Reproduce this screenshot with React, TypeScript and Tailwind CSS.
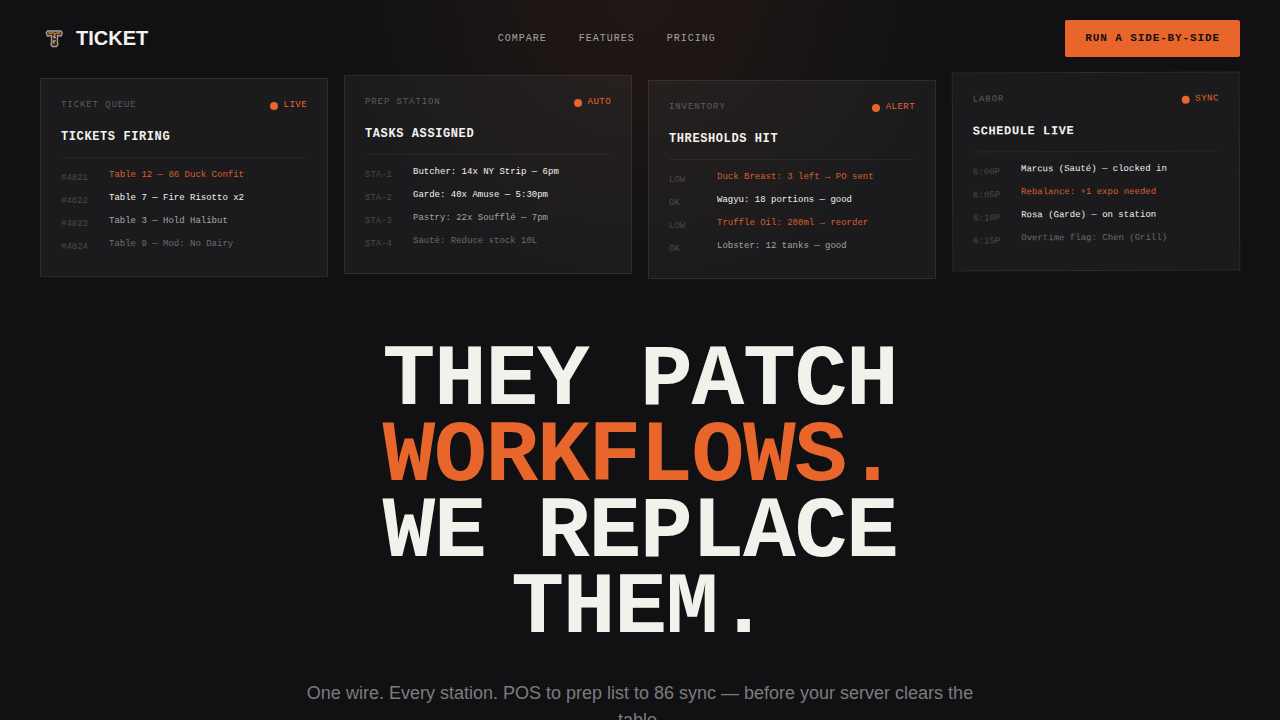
import clsx from "clsx";

type Tone = "hot" | "bright" | "mid" | "dim";

type Station = {
  label: string;
  status: string;
  title: string;
  pose: string;
  rows: { tag: string; text: string; tone: Tone }[];
};

const TONES: Record<Tone, string> = {
  hot: "text-[#d85f2b]",
  bright: "text-[#f4f2ed]",
  mid: "text-[#a3a3a3]",
  dim: "text-[#6a6a6c]",
};

const NAV = ["Compare", "Features", "Pricing"];

const STATIONS: Station[] = [
  {
    label: "Ticket Queue",
    status: "Live",
    title: "Tickets Firing",
    pose: "translate-y-0",
    rows: [
      { tag: "#4821", text: "Table 12 — 86 Duck Confit", tone: "hot" },
      { tag: "#4822", text: "Table 7 — Fire Risotto x2", tone: "bright" },
      { tag: "#4823", text: "Table 3 — Hold Halibut", tone: "mid" },
      { tag: "#4824", text: "Table 9 — Mod: No Dairy", tone: "dim" },
    ],
  },
  {
    label: "Prep Station",
    status: "Auto",
    title: "Tasks Assigned",
    pose: "-translate-y-[3px]",
    rows: [
      { tag: "STA-1", text: "Butcher: 14x NY Strip — 6pm", tone: "bright" },
      { tag: "STA-2", text: "Garde: 40x Amuse — 5:30pm", tone: "bright" },
      { tag: "STA-3", text: "Pastry: 22x Soufflé — 7pm", tone: "mid" },
      { tag: "STA-4", text: "Sauté: Reduce stock 10L", tone: "dim" },
    ],
  },
  {
    label: "Inventory",
    status: "Alert",
    title: "Thresholds Hit",
    pose: "translate-y-[2px]",
    rows: [
      { tag: "LOW", text: "Duck Breast: 3 left → PO sent", tone: "hot" },
      { tag: "OK", text: "Wagyu: 18 portions — good", tone: "bright" },
      { tag: "LOW", text: "Truffle Oil: 200ml → reorder", tone: "hot" },
      { tag: "OK", text: "Lobster: 12 tanks — good", tone: "mid" },
    ],
  },
  {
    label: "Labor",
    status: "Sync",
    title: "Schedule Live",
    pose: "-translate-y-[6px] -rotate-[0.2deg]",
    rows: [
      { tag: "6:00P", text: "Marcus (Sauté) — clocked in", tone: "bright" },
      { tag: "6:05P", text: "Rebalance: +1 expo needed", tone: "hot" },
      { tag: "6:10P", text: "Rosa (Garde) — on station", tone: "bright" },
      { tag: "6:15P", text: "Overtime flag: Chen (Grill)", tone: "dim" },
    ],
  },
];

function Logo() {
  return (
    <svg viewBox="0 0 28 28" className="size-7" aria-hidden="true">
      <path
        d="M7.5 7H21L22.3 8.8L21.2 12L17.5 11.6V18.5L18 20.5L16.5 22.5H12.5L11 20.5L11.5 18.5V11.6L7.3 12L6.2 8.8Z"
        fill="#30231c"
        stroke="#a3a0a0"
        strokeWidth="1.3"
        strokeLinejoin="round"
      />
      <path d="M8.3 9.3H12.5M16.3 9.3H20.3M14.5 10V14.5M13.6 16V20" fill="none" stroke="#ad7836" strokeWidth="1.9" />
      <path d="M12.8 12.5L16 13.8M13 18L16 16.5M12.5 8.5L16 9.8" stroke="#d8c3a0" strokeWidth="0.8" />
    </svg>
  );
}

function StationCard({ label, status, title, pose, rows }: Station) {
  return (
    <article className={clsx("rounded-[1px] border border-white/8 bg-white/[0.045] px-5 pt-5 pb-[17px]", pose)}>
      <div className="flex items-start justify-between text-[9px] leading-3 uppercase">
        <span className="tracking-[0.1em] text-[#5c5c5e]">{label}</span>
        <span className="flex gap-1.5 tracking-[0.05em] text-[#e8662c]">
          <span className="mt-[3px] size-2 rounded-full bg-[#e8662c]" />
          {status}
        </span>
      </div>
      <h2 className="mt-[18px] border-b border-white/5 pb-3 text-[12px] leading-4 font-bold tracking-[0.05em] text-[#f4f2ed] uppercase">
        {title}
      </h2>
      <ul className="mt-[9px] text-[9px]">
        {rows.map((row) => (
          <li key={row.text} className="grid grid-cols-[48px_1fr]">
            <span className="leading-[23px] text-[#4a4a4c]">{row.tag}</span>
            <span className={clsx("leading-[17px]", TONES[row.tone])}>{row.text}</span>
          </li>
        ))}
      </ul>
    </article>
  );
}

export default function App() {
  return (
    <div className="relative isolate min-h-screen overflow-hidden bg-[#111113] font-['Liberation_Mono',monospace] text-[#f4f2ed]">
      <div
        aria-hidden="true"
        className="absolute inset-x-0 top-0 -z-10 h-80 bg-[radial-gradient(ellipse_300px_280px_at_50%_0%,rgba(232,102,44,0.08),transparent)]"
      />

      <header className="flex items-center justify-between px-10 py-5">
        <a
          href="#"
          className="flex items-center gap-2 pb-0.5 font-['Liberation_Sans',sans-serif] text-xl font-bold"
        >
          <Logo />
          TICKET
        </a>
        <nav className="flex gap-8 text-[10px] tracking-[0.1em] text-[#a3a3a3] uppercase">
          {NAV.map((item) => (
            <a key={item} href={`#${item.toLowerCase()}`}>
              {item}
            </a>
          ))}
        </nav>
        <button
          type="button"
          className="rounded-[2px] bg-[#e8662c] px-5 py-3 text-[11px] leading-[13px] font-bold tracking-[0.08em] text-[#111113] uppercase"
        >
          Run a side-by-side
        </button>
      </header>

      <main>
        <section className="grid grid-cols-4 gap-4 px-10 pt-px">
          {STATIONS.map((station) => (
            <StationCard key={station.label} {...station} />
          ))}
        </section>

        <section className="mx-auto mt-[66px] max-w-[680px] text-center">
          <h1 className="text-[88px] leading-[76px] font-bold tracking-[-0.015em] text-[#f3f1ec] uppercase">
            They patch <span className="text-[#e8662c]">workflows.</span>
            <br />
            We replace them.
          </h1>
          <p className="mt-[33px] font-['Liberation_Sans',sans-serif] text-lg leading-[27px] text-[#7c7c7e]">
            One wire. Every station. POS to prep list to 86 sync — before your server clears the table.
          </p>
        </section>
      </main>
    </div>
  );
}
